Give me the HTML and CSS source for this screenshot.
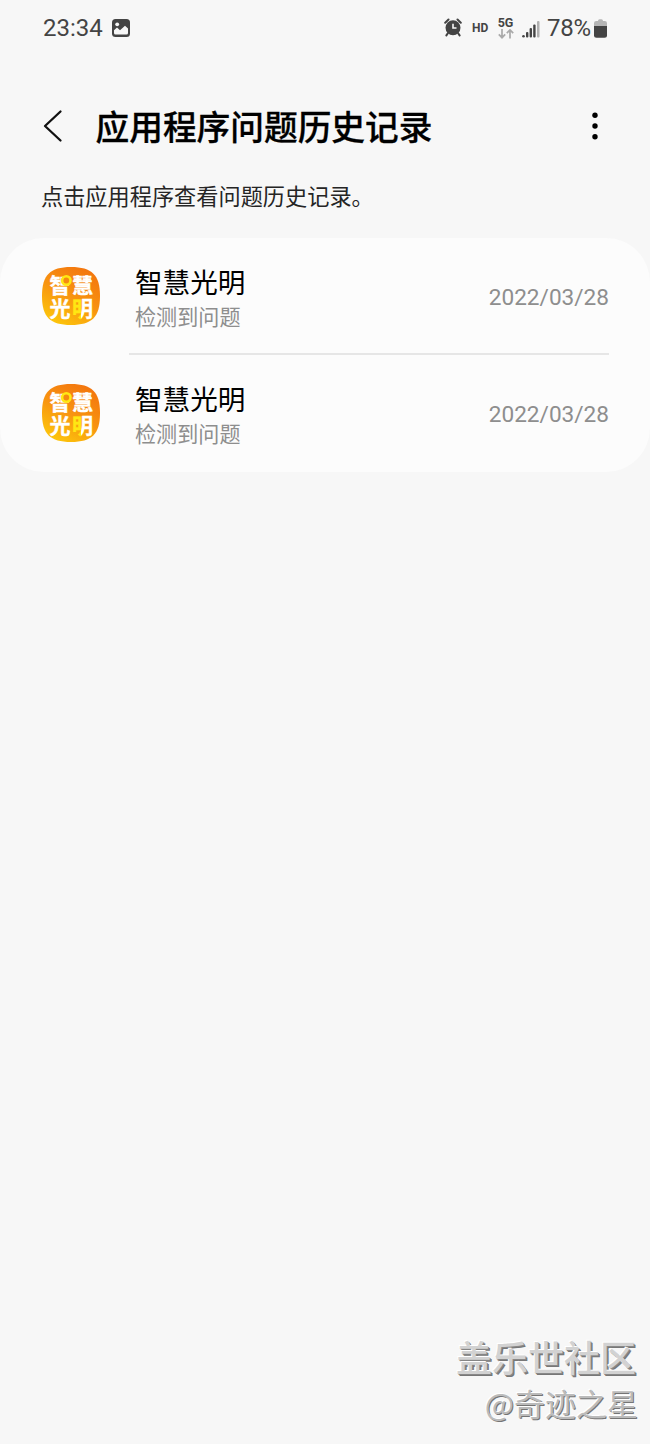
FILE: index.html
```html
<!DOCTYPE html>
<html lang="zh-CN">
<head>
<meta charset="utf-8">
<title>应用程序问题历史记录</title>
<link rel="stylesheet" href="styles.css">
</head>
<body>
<svg width="0" height="0" class="defs" aria-hidden="true">
  <defs>
    <linearGradient id="tile" x1="0.75" y1="0" x2="0.2" y2="1">
      <stop offset="0" stop-color="#f3750e"/>
      <stop offset="0.5" stop-color="#f89410"/>
      <stop offset="1" stop-color="#fdc90b"/>
    </linearGradient>
    <linearGradient id="ming" gradientUnits="userSpaceOnUse" x1="0" y1="0" x2="58" y2="0">
      <stop offset="0.672" stop-color="#ffe713"/>
      <stop offset="0.672" stop-color="#fff"/>
    </linearGradient>
  </defs>
</svg>
<div class="screen">
  <header class="status">
    <span class="clock">23:34</span>
    <svg class="photo" width="18" height="18" viewBox="0 0 18 18"><rect width="18" height="18" rx="3.5" fill="#444"/><circle cx="5.2" cy="5.3" r="1.9" fill="#f7f7f7"/><path d="M2 14V11.2L5 8.5L8 11.2L13 6.8L16 9.5V14Q16 15.5 14.5 15.5H3.5Q2 15.5 2 14Z" fill="#f7f7f7"/></svg>
    <div class="indicators">
      <svg class="alarm" width="18" height="19" viewBox="0 0 18 19"><path d="M1.2 4.8L4.5 1.5M16.8 4.8L13.5 1.5M4 15L2.4 17.4M14 15L15.6 17.4" stroke="#444" stroke-width="2" stroke-linecap="round"/><circle cx="9" cy="9.8" r="7.5" fill="#444"/><path d="M9 5.7V10H12.5" fill="none" stroke="#f7f7f7" stroke-width="1.6"/></svg>
      <span class="hd">HD</span>
      <div class="network"><span>5G</span><svg width="16" height="10" viewBox="0 0 16 10"><path d="M4 0V8.6M.8 5.4L4 8.7L7.2 5.4M12 9.5V1M8.8 4.2L12 .9L15.2 4.2" fill="none" stroke="#aaa" stroke-width="1.7"/></svg></div>
      <svg class="signal" width="18" height="18" viewBox="0 0 18 18"><g fill="#444"><circle cx="1.5" cy="16.2" r="1.3"/><rect x="4" y="12" width="2.4" height="5.5" rx="1"/><rect x="7.6" y="8" width="2.4" height="9.5" rx="1"/><rect x="11.2" y="4.5" width="2.4" height="13" rx="1"/></g><rect x="15" y="1" width="2.5" height="16.5" rx="1" fill="#b0b0b0"/></svg>
      <span class="percent">78%</span>
      <svg class="battery" width="13" height="19" viewBox="0 0 13 19"><path d="M4 2Q4 .3 5.5 .3H7.5Q9 .3 9 2H10.8Q13 2 13 4.2V8H0V4.2Q0 2 2.2 2Z" fill="#b5b5b5"/><path d="M0 7H13V16.2Q13 18.7 10.5 18.7H2.5Q0 18.7 0 16.2Z" fill="#444"/></svg>
    </div>
  </header>

  <div class="toolbar">
    <svg class="back" width="20" height="34" viewBox="0 0 20 34"><path d="M17.5 2.5L2 17L17.5 31.5" fill="none" stroke="#111" stroke-width="2.3" stroke-linecap="round" stroke-linejoin="round"/></svg>
    <h1>应用程序问题历史记录</h1>
    <svg class="more" width="6" height="28" viewBox="0 0 6 28"><circle cx="3" cy="3.3" r="2.7"/><circle cx="3" cy="14" r="2.7"/><circle cx="3" cy="24.7" r="2.7"/></svg>
  </div>

  <p class="hint">点击应用程序查看问题历史记录。</p>

  <main class="card">
    <div class="row">
      <svg class="app" width="58" height="58" viewBox="0 0 58 58"><path d="M29 0C50 0 58 8 58 29S50 58 29 58S0 50 0 29S8 0 29 0Z" fill="url(#tile)"/><g class="logo"><text x="7.5" y="26">智</text><text x="30" y="26">慧</text><text x="7.5" y="48.6">光</text><text class="ming" x="30" y="48.6">明</text></g><circle cx="24.3" cy="13.5" r="4.2" class="ring"/></svg>
      <div class="label"><span class="name">智慧光明</span><span class="detail">检测到问题</span></div>
      <time>2022/03/28</time>
    </div>
    <div class="row">
      <svg class="app" width="58" height="58" viewBox="0 0 58 58"><path d="M29 0C50 0 58 8 58 29S50 58 29 58S0 50 0 29S8 0 29 0Z" fill="url(#tile)"/><g class="logo"><text x="7.5" y="26">智</text><text x="30" y="26">慧</text><text x="7.5" y="48.6">光</text><text class="ming" x="30" y="48.6">明</text></g><circle cx="24.3" cy="13.5" r="4.2" class="ring"/></svg>
      <div class="label"><span class="name">智慧光明</span><span class="detail">检测到问题</span></div>
      <time>2022/03/28</time>
    </div>
  </main>

  <footer class="credit">
    <strong>盖乐世社区</strong>
    <span>@奇迹之星</span>
  </footer>
</div>
</body>
</html>
```
FILE: styles.css
```css
* { box-sizing: border-box; }
body { margin: 0; background: #f7f7f7; font-family: Roboto, "Noto Sans CJK SC", sans-serif; }
.defs { display: block; }
.screen { height: 1444px; display: flex; flex-direction: column; overflow: hidden; }
.status { height: 56px; flex: none; display: flex; align-items: center; padding: 0 43px; color: #444; }
.clock { font-size: 24px; width: 60px; line-height: 56px; white-space: nowrap; }
.photo { margin-left: 9px; }
.indicators { margin-left: auto; display: flex; align-items: center; }
.alarm { margin-top: -2px; }
.hd { font-size: 12px; font-weight: 700; margin-left: 10px; width: 17px; }
.network { width: 17px; margin-left: 8px; display: flex; flex-direction: column; align-items: center; }
.network span { font-size: 12.5px; line-height: 12px; font-weight: 700; }
.signal { margin: 2px 0 0 8px; }
.percent { font-size: 24px; width: 44px; margin-left: 7px; letter-spacing: -0.2px; }
.battery { margin-left: 3px; }
.toolbar { height: 139px; flex: none; display: flex; align-items: center; padding: 0 52px 0 43px; }
.back { flex: none; }
h1 { margin: 0 auto 0 32.5px; padding-top: 6px; font-size: 33.7px; line-height: 50px; font-weight: 500; color: #000; white-space: nowrap; -webkit-text-stroke: 0.3px #000; }
.hint { margin: -14px 0 0 41px; height: 33px; line-height: 33px; font-size: 22.2px; color: #252525; }
.card { margin-top: 24px; height: 234px; flex: none; border-radius: 44px; background: #fcfcfc; padding: 0 41px; }
.row { height: 117px; display: flex; align-items: center; position: relative; }
.row + .row::before { content: ""; position: absolute; left: 88px; right: 0; top: -2px; height: 2px; background: #e6e6e6; }
.app { margin: -2px 0 0 1px; flex: none; }
.logo { fill: #fff; stroke: #fff; stroke-width: 0.4px; font: 700 21px "Noto Sans CJK SC", sans-serif; }
.ming { fill: url(#ming); stroke: url(#ming); }
.ring { fill: #f58a10; stroke: #ffe713; stroke-width: 2.6px; }
.label { margin-left: 35px; padding-top: 4px; display: flex; flex-direction: column; }
.name { font-size: 27.6px; line-height: 38px; color: #000; }
.detail { font-size: 21.1px; line-height: 30px; color: #8e8e8e; }
time { margin-left: auto; padding-top: 2px; font-size: 22.6px; color: #8e8e8e; }
.credit { margin: auto 12px 18px 0; display: flex; flex-direction: column; align-items: flex-end; color: #d2d2d2; text-shadow: -1px -1px 0 #fff, 1px 1px 0 #888, 2px 2px 0 #777; font-family: "Noto Sans CJK SC", sans-serif; }
.credit strong { font-size: 36px; line-height: 48px; font-weight: 500; margin-right: 2px; }
.credit span { font-size: 31px; line-height: 46px; color: #bbb; text-shadow: -1px -1px 0 #fff, 1px 1px 0 #757575; }
```
